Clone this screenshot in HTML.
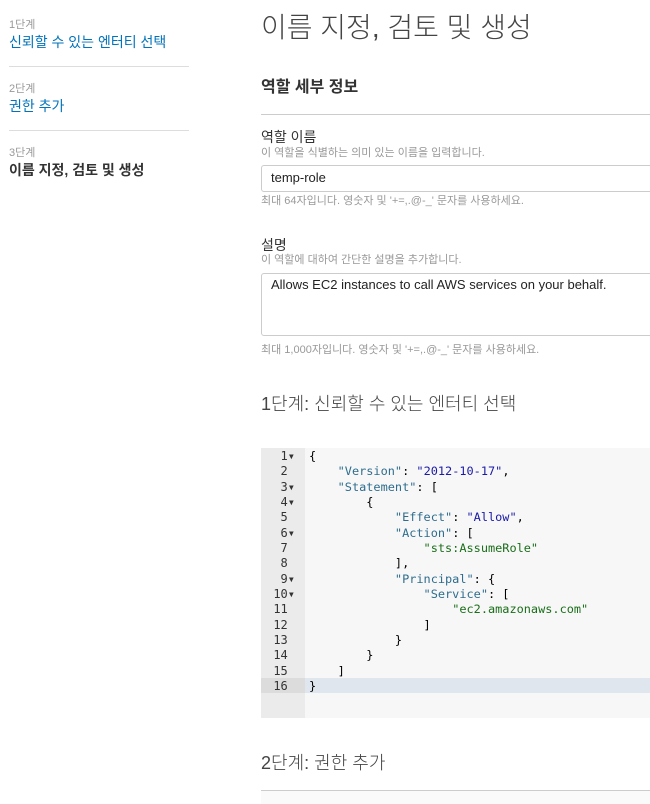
<!DOCTYPE html><html><head><meta charset="utf-8"><style>
body{margin:0;width:650px;height:804px;overflow:hidden;background:#fff;font-family:"Liberation Sans","Noto Sans CJK KR",sans-serif;color:#333;position:relative}
.a{position:absolute;white-space:nowrap;line-height:1}
.step{font-size:11px;color:#999;left:9px}
.lnk{font-size:14px;color:#0073bb;left:9px}
.hr{position:absolute;height:1px;background:#ddd}
.sub{font-size:11px;color:#999;left:261px}
.box{position:absolute;left:261px;width:400px;border:1px solid #ccc;border-radius:3px;box-sizing:border-box}
.code{position:absolute;left:261px;top:448px;width:389px;height:270px;background:#f7f7f7;font-family:"DejaVu Sans Mono","Liberation Mono",monospace;font-size:12px}
.gut{position:absolute;left:0;top:0;width:44px;height:270px;background:#ebebeb}
.ln{position:absolute;left:0;width:34px;text-align:right;color:#333;font-size:12px;line-height:15.33px}
.cl{position:absolute;left:48px;line-height:15.33px;white-space:pre;color:#000;font-size:11.9px}
.k{color:#2e6d8e}.s{color:#1a1aa6}.s2{color:#1a6e1a}
.lt{font-weight:300;color:#444}
</style></head><body>
<div class="a step" style="top:20px">1단계</div>
<div class="a lnk" style="top:35px">신뢰할 수 있는 엔터티 선택</div>
<div class="hr" style="left:9px;top:66px;width:180px"></div>
<div class="a step" style="top:84px">2단계</div>
<div class="a lnk" style="top:99px">권한 추가</div>
<div class="hr" style="left:9px;top:130px;width:180px"></div>
<div class="a step" style="top:148px">3단계</div>
<div class="a" style="left:9px;top:163px;font-size:14px;font-weight:bold;color:#333">이름 지정, 검토 및 생성</div>

<div class="a lt" style="left:261px;top:14px;font-size:28px">이름 지정, 검토 및 생성</div>
<div class="a" style="left:261px;top:80px;font-size:16px;font-weight:bold">역할 세부 정보</div>
<div class="hr" style="left:261px;top:114px;width:389px;background:#ccc"></div>
<div class="a" style="left:261px;top:130px;font-size:14px">역할 이름</div>
<div class="a sub" style="top:148px">이 역할을 식별하는 의미 있는 이름을 입력합니다.</div>
<div class="box" style="top:165px;height:27px"></div>
<div class="a" style="left:271px;top:171px;font-size:13px;color:#222">temp-role</div>
<div class="a sub" style="top:196px">최대 64자입니다. 영숫자 및 '+=,.@-_' 문자를 사용하세요.</div>
<div class="a" style="left:261px;top:238px;font-size:14px">설명</div>
<div class="a sub" style="top:255px">이 역할에 대하여 간단한 설명을 추가합니다.</div>
<div class="box" style="top:273px;height:63px"></div>
<div class="a" style="left:271px;top:278px;font-size:13px;color:#222">Allows EC2 instances to call AWS services on your behalf.</div>
<div class="a sub" style="top:345px">최대 1,000자입니다. 영숫자 및 '+=,.@-_' 문자를 사용하세요.</div>
<div class="a lt" style="left:261px;top:395px;font-size:18px">1단계: 신뢰할 수 있는 엔터티 선택</div>

<div class="code">
<div class="gut"></div>
<div style="position:absolute;left:0;top:230px;width:389px;height:15px;background:#e0e6ee"></div>
<div style="position:absolute;left:0;top:230px;width:44px;height:15px;background:#dcdcdc"></div>
<div style="position:absolute;top:0;left:0;padding-top:1px">
<div class="ln" style="top:1px">1▾</div><div class="ln" style="top:16px">2&nbsp;</div><div class="ln" style="top:31.7px">3▾</div><div class="ln" style="top:47px">4▾</div><div class="ln" style="top:62.3px">5&nbsp;</div><div class="ln" style="top:77.7px">6▾</div><div class="ln" style="top:93px">7&nbsp;</div><div class="ln" style="top:108.3px">8&nbsp;</div><div class="ln" style="top:123.7px">9▾</div><div class="ln" style="top:139px">10▾</div><div class="ln" style="top:154.3px">11&nbsp;</div><div class="ln" style="top:169.7px">12&nbsp;</div><div class="ln" style="top:185px">13&nbsp;</div><div class="ln" style="top:200.3px">14&nbsp;</div><div class="ln" style="top:215.7px">15&nbsp;</div><div class="ln" style="top:231px">16&nbsp;</div>
</div>
<div class="cl" style="top:1px">{
    <span class="k">"Version"</span>: <span class="s">"2012-10-17"</span>,
    <span class="k">"Statement"</span>: [
        {
            <span class="k">"Effect"</span>: <span class="s">"Allow"</span>,
            <span class="k">"Action"</span>: [
                <span class="s2">"sts:AssumeRole"</span>
            ],
            <span class="k">"Principal"</span>: {
                <span class="k">"Service"</span>: [
                    <span class="s2">"ec2.amazonaws.com"</span>
                ]
            }
        }
    ]
}</div>
</div>

<div class="a lt" style="left:261px;top:754px;font-size:18px">2단계: 권한 추가</div>
<div class="hr" style="left:261px;top:790px;width:389px;background:#ccc"></div>
<div style="position:absolute;left:261px;top:791px;width:389px;height:13px;background:#fafafa"></div>
</body></html>
